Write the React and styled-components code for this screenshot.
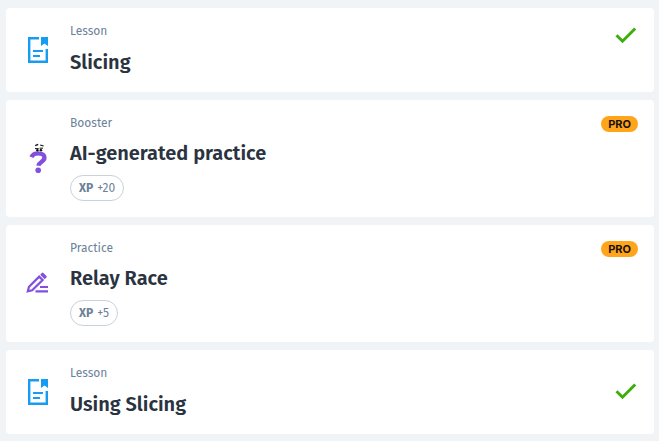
import React from "react";
import styled, { createGlobalStyle } from "styled-components";

const GlobalStyle = createGlobalStyle`
  * { box-sizing: border-box; }
  body {
    margin: 0;
    background: #f0f4f7;
    color: #2a3340;
    font-family: "Fira Sans", Roboto, sans-serif;
  }
`;

const List = styled.ul`
  display: flex;
  flex-direction: column;
  gap: 8px;
  margin: 0;
  padding: 8px 5px 7px 6px;
  list-style: none;
`;

const Card = styled.li`
  display: flex;
  gap: 16px;
  padding: 16px;
  border-radius: 4px;
  background: #fff;
`;

const IconSlot = styled.span`
  display: flex;
  align-items: center;
  justify-content: center;
  flex: none;
  width: 32px;
`;

const Content = styled.div`
  flex: 1;
  min-width: 0;
`;

const Kind = styled.p`
  margin: 0 0 10px;
  color: #6b8299;
  font-size: 12px;
  line-height: 14px;
`;

const Title = styled.h2`
  margin: 0;
  font-size: 20px;
  font-weight: 600;
  line-height: ${(p) => (p.$compact ? "26px" : "28px")};
`;

const Reward = styled.p`
  display: flex;
  gap: 4px;
  width: fit-content;
  margin: 9px 0 0;
  padding: 0 8px;
  border: 1px solid #c8d2db;
  border-radius: 13px;
  color: #6b8299;
  font-size: 12px;
  line-height: 24px;
`;

const Status = styled.div`
  display: flex;
  flex: none;
  align-self: ${(p) => (p.$centered ? "center" : "flex-start")};
`;

const Pro = styled.span`
  padding: 0 7px;
  border-radius: 8px;
  background: #ffa51b;
  color: #17110a;
  font-family: Inter, sans-serif;
  font-size: 11px;
  font-weight: 700;
  line-height: 16px;
`;

const LessonIcon = () => (
  <svg width="24" height="28" viewBox="0 0 24 28" fill="none" stroke="#169cf3" strokeWidth="2.4" aria-hidden="true">
    <path d="M13 2.2H3.2v23.6h17.6V13" />
    <path d="M15 1h7v9l-3.5-2.5L15 10z" fill="#169cf3" stroke="none" />
    <path d="M7 15h10M7 20h7" strokeWidth="2.2" />
  </svg>
);

const BoosterIcon = () => (
  <svg width="24" height="32" viewBox="0 0 24 32" fill="none" aria-hidden="true">
    <path
      d="M5.4 14.2C6.6 11.4 9 10.4 12.2 10.4c3.9 0 6.2 1.5 6.2 4.4 0 4.2-5.6 4-6 8"
      stroke="#824fdf"
      strokeWidth="4.4"
    />
    <circle cx="12.2" cy="27.2" r="2.8" fill="#824fdf" />
    <path d="M9.2 2.6l3-1.3M14.2 2l3.4 1" stroke="#111119" strokeWidth="1.3" />
    <circle cx="11.3" cy="7.1" r="2" fill="#fff" />
    <circle cx="15.1" cy="6.9" r="2" fill="#fff" />
    <circle cx="11.4" cy="7.4" r="1.3" fill="#111119" />
    <circle cx="14.9" cy="7.2" r="1.3" fill="#111119" />
    <path d="M9 5.6h3.6M13.6 5.2H17" stroke="#111119" />
  </svg>
);

const PracticeIcon = () => (
  <svg width="24" height="24" viewBox="0 0 24 24" fill="none" stroke="#824fdf" strokeWidth="2.2" aria-hidden="true">
    <path d="M1.8 19.2L3 14.8 13.2 4.6l3.4 3.4L6.2 18.2z" />
    <path d="M14.2 2.7L15.8 1q.8-.8 1.6 0l3 3q.8.8 0 1.6l-1.7 1.7z" fill="#824fdf" stroke="none" />
    <path d="M14 15h8M9.5 19.4H22" />
  </svg>
);

const DoneIcon = () => (
  <svg width="24" height="24" viewBox="0 0 24 24" fill="none" role="img" aria-label="Completed">
    <path d="M2.5 11.2l6 6L21.2 4.5" stroke="#3fae0c" strokeWidth="3" />
  </svg>
);

const icons = { Lesson: LessonIcon, Booster: BoosterIcon, Practice: PracticeIcon };

const steps = [
  { kind: "Lesson", title: "Slicing" },
  { kind: "Booster", title: "AI-generated practice", xp: 20 },
  { kind: "Practice", title: "Relay Race", xp: 5 },
  { kind: "Lesson", title: "Using Slicing", centered: true },
];

export default function App() {
  return (
    <>
      <GlobalStyle />
      <List>
        {steps.map(({ kind, title, xp, centered }) => {
          const Icon = icons[kind];
          return (
            <Card key={title}>
              <IconSlot>
                <Icon />
              </IconSlot>
              <Content>
                <Kind>{kind}</Kind>
                <Title $compact={Boolean(xp)}>{title}</Title>
                {xp && (
                  <Reward>
                    <strong>XP</strong>
                    <span>+{xp}</span>
                  </Reward>
                )}
              </Content>
              <Status $centered={centered}>
                {xp ? <Pro>PRO</Pro> : <DoneIcon />}
              </Status>
            </Card>
          );
        })}
      </List>
    </>
  );
}
